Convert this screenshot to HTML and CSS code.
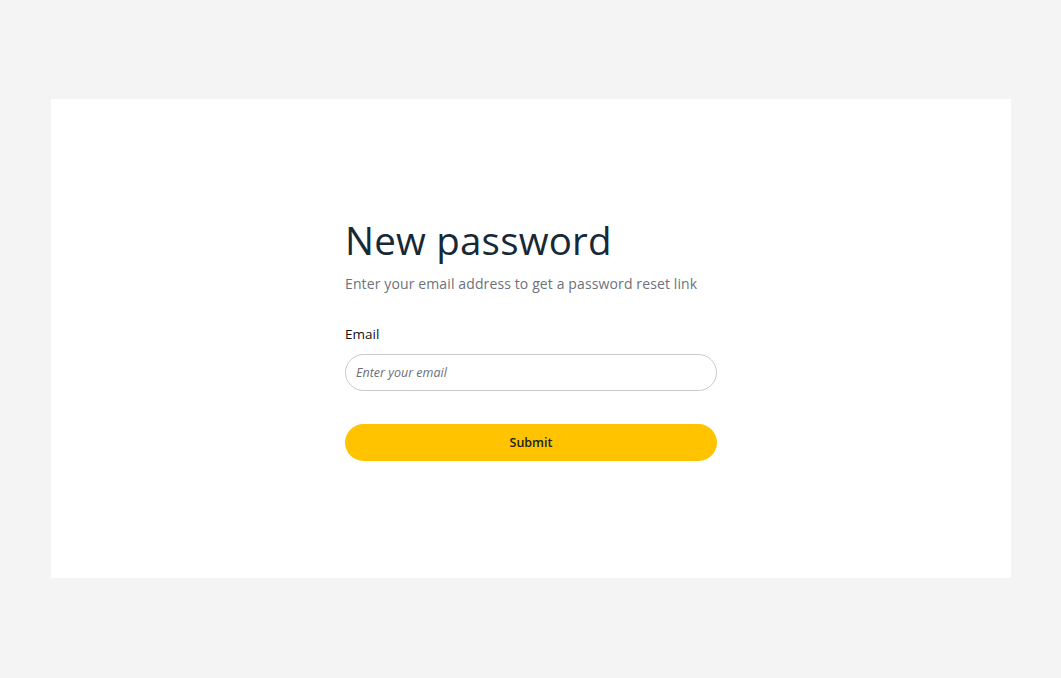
FILE: index.html
```html
<!DOCTYPE html>
<html lang="en">
<head>
<meta charset="utf-8">
<title>New password</title>
<link rel="stylesheet" href="styles.css">
</head>
<body>
<main class="page">
  <section class="card">
    <form class="form">
      <h1 class="title">New password</h1>
      <p class="subtitle">Enter your email address to get a password reset link</p>
      <label class="label" for="email">Email</label>
      <input class="input" id="email" type="email" placeholder="Enter your email">
      <button class="submit" type="button">Submit</button>
    </form>
  </section>
</main>
</body>
</html>
```
FILE: styles.css
```css
* { box-sizing: border-box; }
html, body { margin: 0; padding: 0; }
body {
  background: #f4f4f4;
  font-family: "Open Sans", "Noto Sans", sans-serif;
}
.page {
  height: 678px;
  display: flex;
  align-items: center;
  justify-content: center;
  padding-left: 1px;
  padding-bottom: 1px;
}
.card {
  width: 960px;
  height: 479px;
  background: #ffffff;
  display: flex;
  align-items: center;
  justify-content: center;
}
.form {
  width: 372px;
  display: flex;
  flex-direction: column;
  margin-top: 2px;
}
.title {
  margin: 0;
  font-size: 38.5px;
  font-weight: 400;
  line-height: 44px;
  color: #172836;
  letter-spacing: 0.2px;
}
.subtitle {
  margin: 12px 0 0;
  font-size: 14px;
  line-height: 20px;
  color: #6c727c;
  letter-spacing: 0.12px;
}
.label {
  margin-top: 30px;
  font-size: 13.5px;
  line-height: 20px;
  color: #111111;
}
.input {
  margin-top: 10px;
  height: 37px;
  border: 1px solid #c9c9c9;
  border-radius: 19px;
  padding: 0 10px;
  font-family: inherit;
  font-size: 12.5px;
  font-style: italic;
  color: #333;
  outline: none;
}
.input::placeholder { color: #6b6f78; }
.submit {
  margin-top: 33px;
  height: 37px;
  border: 0;
  border-radius: 19px;
  background: #ffc300;
  font-family: inherit;
  font-size: 12.5px;
  font-weight: 600;
  color: #222;
}
```
